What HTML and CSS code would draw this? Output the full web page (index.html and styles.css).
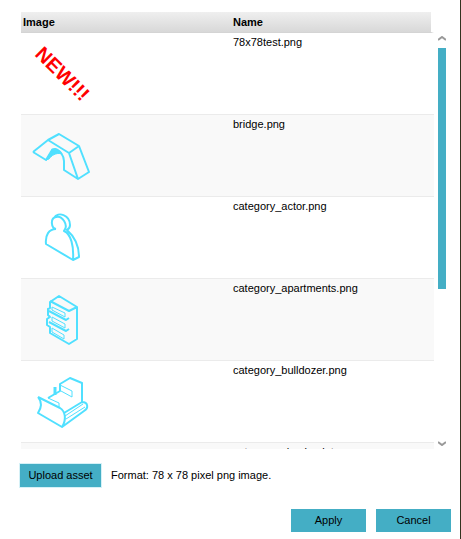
FILE: index.html
```html
<!DOCTYPE html>
<html lang="en">
<head>
<meta charset="utf-8">
<title>Assets</title>
<link rel="stylesheet" href="styles.css">
</head>
<body>
<main class="dialog">
  <section class="assets">
    <div class="list">
      <table class="table">
        <thead>
          <tr><th class="col-image" scope="col">Image</th><th class="col-name" scope="col">Name</th></tr>
        </thead>
        <tbody>
          <tr>
            <td><svg class="thumb" viewBox="0 0 78 78" aria-label="NEW!!!"><text class="new" transform="translate(11 22) rotate(45)">NEW!!!</text></svg></td>
            <td>78x78test.png</td>
          </tr>
          <tr>
            <td><svg class="thumb" viewBox="0 0 78 78"><path d="M10 37L25 25L36 19L56 31L66 57L55 64L41 55V46C41 41 37 35 32 34C30 34 29 34 29 35L23 45L10 37M25 25L46 38L56 31M46 38L55 64"/><path class="solid" d="M23 45L29 35C32 33 37 35 39 39C33 37 28 41 26 44Z"/></svg></td>
            <td>bridge.png</td>
          </tr>
          <tr>
            <td><svg class="thumb" viewBox="0 0 78 78"><path d="M33 32C28 31 27 21 33 20C39 18 46 28 41 34C48 37 51 49 50 63L23 47C22 38 26 32 33 32M31 21C35 14 47 18 47 28C47 31 46 32 44 33C52 40 56 49 56 60L50 63"/></svg></td>
            <td>category_actor.png</td>
          </tr>
          <tr>
            <td><svg class="thumb" viewBox="0 0 78 78"><path d="M27 23L36 17L54 28V60L46 65L27 54V48L24 46V40L27 38L25 36V30L27 29ZM54 28L46 32L27 22M26 32L43 41L46 39M26 43L43 52L46 50"/><path class="thin" d="M29 28L42 34V38L29 31ZM29 38L42 45V49L29 42ZM29 49L41 56V60L29 53Z"/></svg></td>
            <td>category_apartments.png</td>
          </tr>
          <tr>
            <td><svg class="thumb" viewBox="0 0 78 78"><path d="M15 36L37 47C42 50 44 58 39 66L15 52C19 46 19 41 15 36M39 66L61 50C66 47 65 41 59 41L41 52M59 41V22L47 17L37 23V30L25 37"/><path class="pipe" d="M32 26V34"/><path class="thin" d="M37 24L49 30V36L38 30M25 37L36 42V47M42 55L60 43M43 58L62 46"/></svg></td>
            <td>category_bulldozer.png</td>
          </tr>
          <tr><td></td><td>category_checkpoint.png</td></tr>
        </tbody>
      </table>
    </div>
    <div class="scrollbar" aria-hidden="true">
      <svg class="arrow" viewBox="0 0 8 5"><path d="M0 4L4 1L8 4"/></svg>
      <div class="track"><div class="thumb-bar"></div></div>
      <svg class="arrow" viewBox="0 0 8 5"><path d="M0 1L4 4L8 1"/></svg>
    </div>
  </section>
  <div class="upload">
    <button class="button button-upload" type="button">Upload asset</button>
    <span>Format: 78 x 78 pixel png image.</span>
  </div>
  <div class="actions">
    <button class="button" type="button">Apply</button>
    <button class="button" type="button">Cancel</button>
  </div>
</main>
</body>
</html>
```
FILE: styles.css
```css
* { box-sizing: border-box; }

body {
  margin: 0;
  background: #fff;
  color: #000;
  font: 11px/18px "Liberation Sans", Arial, sans-serif;
}

.dialog {
  display: flex;
  flex-direction: column;
  min-height: 100vh;
  padding: 12px 9px 7px 20px;
  border-right: 1px solid #33331f;
}

.assets {
  display: flex;
  gap: 4px;
  padding-left: 1px;
}

.list {
  flex: 1;
  height: 437px;
  overflow: hidden;
}

.table {
  width: 100%;
  border-collapse: separate;
  border-spacing: 0;
  table-layout: fixed;
}

.table th {
  height: 21px;
  padding: 0 2px;
  border-bottom: 1px solid #d4d4d4;
  background: linear-gradient(#efefef, #d8d8d8);
  text-align: left;
}

.table .col-image { width: 210px; }

.table .col-name { border-right: 3px solid #fff; }

.table td {
  height: 82px;
  padding: 0 2px;
  border-bottom: 1px solid #ebebeb;
  vertical-align: top;
}

.table tbody tr:nth-child(even) { background: #f9f9f9; }

.thumb {
  display: block;
  width: 78px;
  height: 78px;
  fill: none;
  stroke: #50e0ff;
  stroke-width: 2;
  stroke-linejoin: round;
}

.thumb .thin { stroke-width: 1; }

.thumb .pipe { stroke-width: 3; }

.thumb .solid {
  fill: #50e0ff;
  stroke-width: 1;
}

.thumb .new {
  fill: #f00;
  stroke: none;
  font-size: 20px;
  font-weight: bold;
}

.scrollbar {
  display: flex;
  flex-direction: column;
  gap: 7px;
  width: 8px;
  margin-right: 5px;
  padding: 24px 0 3px;
}

.arrow {
  width: 8px;
  height: 5px;
  fill: none;
  stroke: #999;
  stroke-width: 2;
}

.track { flex: 1; }

.thumb-bar {
  height: 62.5%;
  background: #44aec5;
}

.upload {
  display: flex;
  align-items: center;
  gap: 10px;
  margin-top: 15px;
}

.button {
  width: 75px;
  height: 23px;
  padding: 0 0 1px;
  border: 0;
  background: #44aec5;
  color: #000;
  font: inherit;
}

.button-upload {
  width: 81px;
  outline: 1px solid #d5f1f7;
}

.upload span { padding-bottom: 1px; }

.actions {
  display: flex;
  justify-content: flex-end;
  gap: 10px;
  margin-top: auto;
}
```
